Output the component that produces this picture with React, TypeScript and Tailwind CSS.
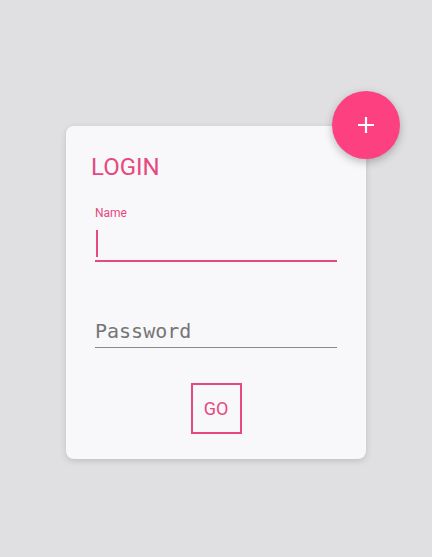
import React from "react";

export default function App() {
  return (
    <div className="h-[557px] w-full bg-[#e0e0e2] flex justify-center pt-[126px]" style={{ fontFamily: "Roboto, 'Noto Sans', sans-serif" }}>
      <div className="relative w-[300px] h-[333px] rounded-lg bg-[#f8f8fa] shadow-[0_2px_6px_rgba(0,0,0,0.15)] flex flex-col">
        <button className="absolute right-[-34px] top-[-35px] w-[68px] h-[68px] rounded-full bg-[#fd4080] shadow-[0_3px_8px_rgba(0,0,0,0.25)] flex items-center justify-center">
          <svg width="20" height="20" viewBox="0 0 20 20">
            <path d="M10 2v16M2 10h16" stroke="white" strokeWidth="2.2" />
          </svg>
        </button>
        <div className="pl-[25px] pt-[27px] text-[24px] leading-[28px] text-[#e64980]">LOGIN</div>
        <div className="px-[29px] mt-[25px] flex flex-col">
          <label className="text-[12px] leading-[14px] text-[#e64980]">Name</label>
          <div className="mt-[10px] h-[32px] border-b-2 border-[#e64980] flex items-start">
            <div className="w-[2px] h-[27px] bg-[#e64980] ml-[1px]" />
          </div>
          <div className="mt-[57px] h-[29px] border-b border-[#8a8a8a] text-[20px] leading-[24px] text-[#757575]" style={{ fontFamily: "'DejaVu Sans Mono', monospace" }}>
            Password
          </div>
        </div>
        <div className="flex justify-center mt-[35px]">
          <button className="w-[51px] h-[51px] border-2 border-[#e64980] text-[#e64980] text-[18px] flex items-center justify-center">GO</button>
        </div>
      </div>
    </div>
  );
}
